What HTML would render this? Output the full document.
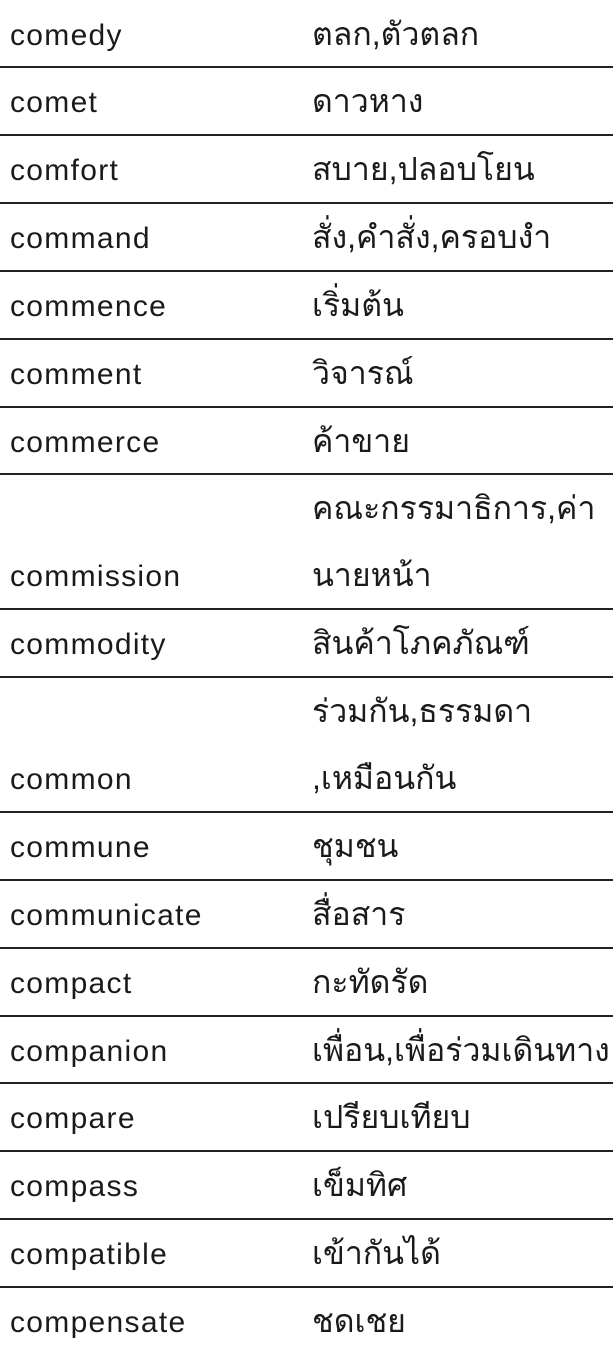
<!DOCTYPE html>
<html><head><meta charset="utf-8"><style>
body{margin:0;width:613px;height:1345px;background:#fff;position:relative;overflow:hidden;font-family:"Liberation Sans","DejaVu Sans",sans-serif;color:#1a1a1a;font-size:30px;letter-spacing:1.3px}
.t{position:absolute;height:68px;line-height:72px;white-space:nowrap}
.t[style*="312px"]{font-size:32px;letter-spacing:0;line-height:68px}
.l{position:absolute;left:0;width:613px;height:2px;background:#222}
</style></head><body>
<div class="t" style="top:0;left:10px">comedy</div><div class="t" style="top:0;left:312px">ตลก,ตัวตลก</div>
<div class="l" style="top:66px"></div>
<div class="t" style="top:67px;left:10px">comet</div><div class="t" style="top:67px;left:312px">ดาวหาง</div>
<div class="l" style="top:134px"></div>
<div class="t" style="top:135px;left:10px">comfort</div><div class="t" style="top:135px;left:312px">สบาย,ปลอบโยน</div>
<div class="l" style="top:202px"></div>
<div class="t" style="top:203px;left:10px">command</div><div class="t" style="top:203px;left:312px">สั่ง,คำสั่ง,ครอบงำ</div>
<div class="l" style="top:270px"></div>
<div class="t" style="top:271px;left:10px">commence</div><div class="t" style="top:271px;left:312px">เริ่มต้น</div>
<div class="l" style="top:338px"></div>
<div class="t" style="top:339px;left:10px">comment</div><div class="t" style="top:339px;left:312px">วิจารณ์</div>
<div class="l" style="top:406px"></div>
<div class="t" style="top:407px;left:10px">commerce</div><div class="t" style="top:407px;left:312px">ค้าขาย</div>
<div class="l" style="top:473px"></div>
<div class="t" style="top:474px;left:312px">คณะกรรมาธิการ,ค่า</div>
<div class="t" style="top:541px;left:10px">commission</div><div class="t" style="top:541px;left:312px">นายหน้า</div>
<div class="l" style="top:608px"></div>
<div class="t" style="top:609px;left:10px">commodity</div><div class="t" style="top:609px;left:312px">สินค้าโภคภัณฑ์</div>
<div class="l" style="top:676px"></div>
<div class="t" style="top:677px;left:312px">ร่วมกัน,ธรรมดา</div>
<div class="t" style="top:744px;left:10px">common</div><div class="t" style="top:744px;left:312px">,เหมือนกัน</div>
<div class="l" style="top:811px"></div>
<div class="t" style="top:812px;left:10px">commune</div><div class="t" style="top:812px;left:312px">ชุมชน</div>
<div class="l" style="top:879px"></div>
<div class="t" style="top:880px;left:10px">communicate</div><div class="t" style="top:880px;left:312px">สื่อสาร</div>
<div class="l" style="top:947px"></div>
<div class="t" style="top:948px;left:10px">compact</div><div class="t" style="top:948px;left:312px">กะทัดรัด</div>
<div class="l" style="top:1015px"></div>
<div class="t" style="top:1016px;left:10px">companion</div><div class="t" style="top:1016px;left:312px">เพื่อน,เพื่อร่วมเดินทาง</div>
<div class="l" style="top:1082px"></div>
<div class="t" style="top:1083px;left:10px">compare</div><div class="t" style="top:1083px;left:312px">เปรียบเทียบ</div>
<div class="l" style="top:1150px"></div>
<div class="t" style="top:1151px;left:10px">compass</div><div class="t" style="top:1151px;left:312px">เข็มทิศ</div>
<div class="l" style="top:1218px"></div>
<div class="t" style="top:1219px;left:10px">compatible</div><div class="t" style="top:1219px;left:312px">เข้ากันได้</div>
<div class="l" style="top:1286px"></div>
<div class="t" style="top:1287px;left:10px">compensate</div><div class="t" style="top:1287px;left:312px">ชดเชย</div>
</body></html>
